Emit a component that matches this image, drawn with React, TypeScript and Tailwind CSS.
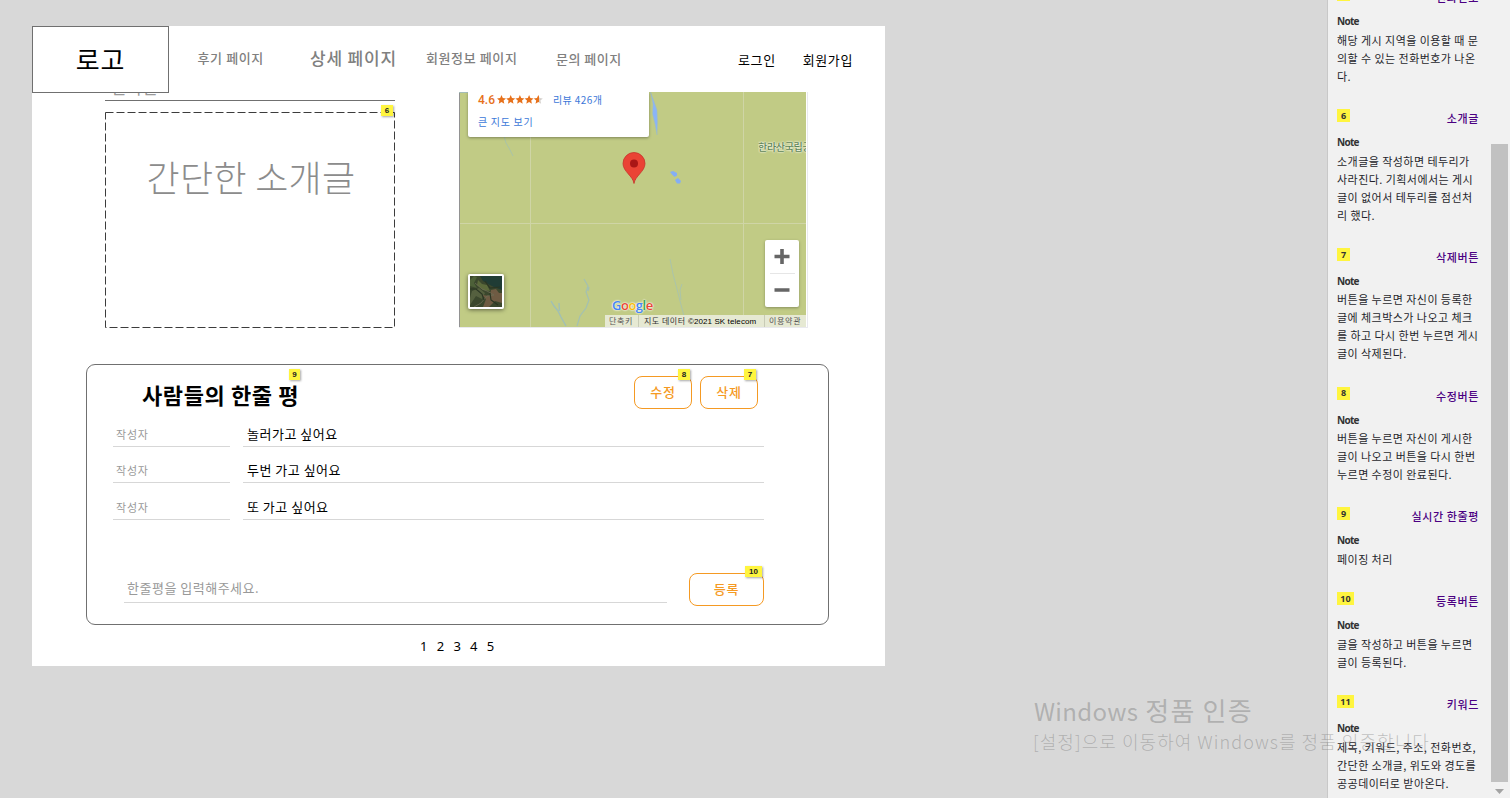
import React from 'react';

type NoteItem = { id: string; title: string; lines: string[] };

const notes: NoteItem[] = [
  { id: '5', title: '전화번호', lines: ['해당 게시 지역을 이용할 때 문', '의할 수 있는 전화번호가 나온', '다.'] },
  { id: '6', title: '소개글', lines: ['소개글을 작성하면 테두리가', '사라진다. 기획서에서는 게시', '글이 없어서 테두리를 점선처', '리 했다.'] },
  { id: '7', title: '삭제버튼', lines: ['버튼을 누르면 자신이 등록한', '글에 체크박스가 나오고 체크', '를 하고 다시 한번 누르면 게시', '글이 삭제된다.'] },
  { id: '8', title: '수정버튼', lines: ['버튼을 누르면 자신이 게시한', '글이 나오고 버튼을 다시 한번', '누르면 수정이 완료된다.'] },
  { id: '9', title: '실시간 한줄평', lines: ['페이징 처리'] },
  { id: '10', title: '등록버튼', lines: ['글을 작성하고 버튼을 누르면', '글이 등록된다.'] },
  { id: '11', title: '키워드', lines: ['제목, 키워드, 주소, 전화번호,', '간단한 소개글, 위도와 경도를', '공공데이터로 받아온다.'] },
];

function Marker({ n, className }: { n: string; className: string }) {
  return (
    <span
      className={`absolute flex h-[11px] items-center justify-center bg-[#fff53f] font-['Liberation_Sans'] text-[8px] leading-none font-bold tracking-normal text-[#222] shadow-[1px_1px_2px_rgba(0,0,0,0.35)] ${className}`}
    >
      {n}
    </span>
  );
}

function Header() {
  return (
    <header className="relative z-10 flex h-[66px] shrink-0 bg-white text-[13px] leading-[20px] text-[#808080]">
      <div className="flex h-[67px] w-[137px] shrink-0 items-center justify-center border border-[#707070] bg-white pb-[2px] text-[26px] tracking-[0.8px] text-black">
        로고
      </div>
      <nav className="flex font-medium">
        <span className="mt-[22px] ml-[28.500px] w-[112.500px] tracking-[0.6px]">후기 페이지</span>
        <span className="mt-[22px] w-[116px] text-[17px] tracking-[0.8px]">상세 페이지</span>
        <span className="mt-[22px] w-[130px] tracking-[0.6px]">회원정보 페이지</span>
        <span className="mt-[23px] tracking-[0.5px]">문의 페이지</span>
      </nav>
      <div className="mt-[24px] mr-[32px] ml-auto flex gap-[27px] tracking-[0.6px] text-black">
        <span>로그인</span>
        <span>회원가입</span>
      </div>
    </header>
  );
}

function Intro() {
  return (
    <div className="w-[290px] shrink-0">
      <div className="flex h-[9px] items-end overflow-hidden border-b border-[#707070]">
        <span className="mb-[2px] ml-[6px] text-[17px] leading-[22px] text-[#999]">한라산</span>
      </div>
      <div className="relative mt-[11px] flex h-[216px] justify-center pt-[38px] text-[36px] leading-[52px] font-light tracking-[0.3px] text-[#8c8c8c]">
        <svg className="absolute inset-0" width="290" height="216">
          <rect x="0.5" y="0.5" width="289" height="215" fill="none" stroke="#3c3c3c" strokeDasharray="8 3" />
        </svg>
        <span className="ml-[2px]">간단한 소개글</span>
        <Marker n="6" className="top-[-7px] right-[2px] w-[12px]" />
      </div>
    </div>
  );
}

const starPath = 'M4.5 0 L5.8 3.1 L9 3.4 L6.6 5.6 L7.3 8.8 L4.5 7.1 L1.7 8.8 L2.4 5.6 L0 3.4 L3.2 3.1 Z';

function Stars() {
  return (
    <svg width="46" height="9" viewBox="0 0 46 9">
      <defs>
        <linearGradient id="half">
          <stop offset="55%" stopColor="#e7711b" />
          <stop offset="55%" stopColor="#d3cfcb" />
        </linearGradient>
      </defs>
      {[0, 1, 2, 3, 4].map((i) => (
        <path key={i} d={starPath} transform={`translate(${i * 9.2} 0)`} fill={i === 4 ? 'url(#half)' : '#e7711b'} />
      ))}
    </svg>
  );
}

function GoogleMap() {
  return (
    <div className="relative ml-[64px] h-[236px] w-[349px] shrink-0 overflow-hidden border-r border-b border-[#e9e9ee] bg-white">
      <svg className="absolute top-0 left-0" width="347" height="235" viewBox="0 0 347 235">
        <rect width="347" height="235" fill="#c1cb85" />
        <path d="M0.5 0V235" stroke="#929292" />
        <path d="M0 .5H9" stroke="#a4bdb9" />
        <path d="M71.500 0V235M284.500 0V235M1 131.500H347" stroke="#cfd5a6" />
        <path d="M191.500 0L194.500 8L198 18L198.500 30L198 43L196 32L193.500 22L194 12Z" fill="#8ab4f8" stroke="#a2bfb8" strokeWidth=".5" />
        <path d="M45 44L47 51L50 56L54 64" fill="none" stroke="#a9c3a8" strokeWidth="1" />
        <path d="M211 80L214 79L218 81V83.500L215.500 85L213 82.500Z" fill="#84aef5" />
        <path d="M216 88L219 86L222 89L221 91.500H218Z" fill="#84aef5" />
        <path d="M92 209L95 214L99 219L102 225L107 234M100 211L100.500 219" fill="none" stroke="#a0bfb5" strokeWidth="1.4" />
        <path d="M125 187L129 194L127 200L130 208L127 216L121 224L118 234M130 195L129 199" fill="none" stroke="#a3c0b2" strokeWidth="1.200" />
        <path d="M211 167L214 182L218 197L221 209L225 224L226 234M223 192L221 198L222 208" fill="none" stroke="#abc4aa" strokeWidth="1" />
        <path d="M175 91.500C174 84 164 79.500 164 71.500A11 11 0 0 1 186 71.500C186 79.500 176 84 175 91.500Z" fill="#ea4335" stroke="#c5332b" strokeWidth=".8" />
        <circle cx="175" cy="71.500" r="4" fill="#a91616" />
      </svg>
      <div className="absolute top-0 left-[9px] h-[45px] w-[181px] rounded-b-[2px] bg-white pl-[10px] text-[11px] text-[#3c78d8] shadow-[0_1px_3px_rgba(0,0,0,0.35)]">
        <div className="flex h-[15px] items-center">
          <span className="w-[19px] font-['Roboto'] text-[12px] font-medium text-[#e7711b]">4.6</span>
          <Stars />
          <span className="ml-[10px] text-[10px] tracking-[0.4px]">리뷰 426개</span>
        </div>
        <div className="mt-[6px] text-[10px] leading-[18px] tracking-[0.7px]">큰 지도 보기</div>
      </div>
      <span className="absolute top-[47px] left-[299px] w-[48px] overflow-hidden text-[10px] leading-[16px] font-medium tracking-[-0.3px] whitespace-nowrap text-[#5f8555] [text-shadow:0_0_2px_#fff,0_0_2px_#fff]">
        한라산국립공원
      </span>
      <div className="absolute top-[182px] left-[9px] h-[35px] w-[36px] overflow-hidden rounded-[2px] border-2 border-white shadow-[0_1px_4px_rgba(0,0,0,0.5)]">
        <svg width="32" height="31" viewBox="0 0 32 31">
          <rect width="32" height="31" fill="#3b472d" />
          <path d="M10 0H32V14L24 11L18 8L13 5Z" fill="#203c35" />
          <path d="M0 4L4 0L7 1L4 7L7 12L0 10Z" fill="#4d6038" />
          <path d="M8 4L12 8L17 9L20 15L13 14L7 9Z" fill="#5c6a3b" />
          <path d="M2 15L9 12L15 17L12 23L6 20L0 29V22Z" fill="#55603f" />
          <path d="M21 14L26 13L29 17H32V27L25 25L19 31H13L16 23L12 19L20 20Z" fill="#6f5b43" />
          <path d="M5 7L12 13L17 15L24 19L17 20L11 27L4 31" fill="none" stroke="#6c6c54" strokeWidth=".8" />
          <path d="M0 13L6 13L12 18L14 24M15 5L20 12L30 11M20 17L21 24L28 29" fill="none" stroke="#2b3623" strokeWidth="1.200" />
        </svg>
      </div>
      <div className="absolute top-[148px] left-[306px] flex h-[67px] w-[34px] flex-col items-center rounded-[2px] bg-white shadow-[0_1px_3px_rgba(0,0,0,0.3)]">
        <svg width="34" height="67" viewBox="0 0 34 67">
          <path d="M9.500 16.500H24.500M17 9V24M9.500 50H24.500" stroke="#666" strokeWidth="3.600" />
          <path d="M5 33.500H30" stroke="#e6e6e6" />
        </svg>
      </div>
      <span className="absolute top-[204px] left-[153px] font-['Open_Sans'] text-[13px] leading-[18px] font-semibold tracking-[-0.5px] [text-shadow:0_0_2px_#fff,0_0_2px_#fff]">
        <span className="text-[#4285f4]">G</span>
        <span className="text-[#ea4335]">o</span>
        <span className="text-[#fbbc05]">o</span>
        <span className="text-[#4285f4]">g</span>
        <span className="text-[#34a853]">l</span>
        <span className="text-[#ea4335]">e</span>
      </span>
      <div className="absolute top-[223px] left-[146px] flex h-[12px] w-[201px] bg-[#e6e9d3] text-[8px] leading-[12px] whitespace-nowrap text-[#555]">
        <span className="w-[34px] border-r border-[#c8cbb6] pl-[4px] tracking-[0.6px]">단축키</span>
        <span className="w-[126px] border-r border-[#c8cbb6] pl-[5px] tracking-[0.5px] text-[#333]">
          지도 데이터 <span className="font-['Liberation_Sans'] tracking-[0.1px] text-black">©2021 SK telecom</span>
        </span>
        <span className="pl-[4px] tracking-[0.7px]">이용약관</span>
      </div>
    </div>
  );
}

function OutlineButton({ label, n, className }: { label: string; n: string; className: string }) {
  return (
    <div
      className={`relative flex h-[33px] items-center justify-center rounded-[8px] border border-[#f59a23] bg-white pb-px text-[13px] font-medium tracking-[0.7px] text-[#f59a23] ${className}`}
    >
      {label}
      <Marker n={n} className={n.length > 1 ? 'top-[-8px] right-[1px] w-[17px]' : 'top-[-8px] right-[1px] w-[12px]'} />
    </div>
  );
}

function Reviews() {
  return (
    <section className="mt-[36px] ml-[54px] flex h-[261px] w-[743px] flex-col rounded-[9px] border border-[#707070] bg-white">
      <div className="flex h-[46px] pt-[11px]">
        <h2 className="relative ml-[55px] pt-[2px] text-[22px] leading-[32px] font-bold tracking-[0.6px] text-black">
          사람들의 한줄 평
          <Marker n="9" className="top-[-7px] right-[-1px] w-[11px]" />
        </h2>
        <div className="mr-[70px] ml-auto flex gap-[8px]">
          <OutlineButton label="수정" n="8" className="w-[58px]" />
          <OutlineButton label="삭제" n="7" className="w-[58px]" />
        </div>
      </div>
      <div className="ml-[26px] flex w-[651px] flex-col">
        <Row text="놀러가고 싶어요" className="h-[36px]" />
        <Row text="두번 가고 싶어요" className="h-[36px]" />
        <Row text="또 가고 싶어요" className="h-[37px]" />
      </div>
      <div className="mt-[53px] ml-[37px] flex w-[640px] justify-between">
        <div className="h-[30px] w-[543px] border-b border-[#d7d7d7] pl-[3px] text-[13px] leading-[30px] tracking-[0.5px] text-[#999]">
          한줄평을 입력해주세요.
        </div>
        <OutlineButton label="등록" n="10" className="w-[75px]" />
      </div>
    </section>
  );
}

function Row({ text, className }: { text: string; className: string }) {
  return (
    <div className={`flex items-end gap-[13px] ${className}`}>
      <div className="h-[26px] w-[117px] border-b border-[#d7d7d7] pl-[3px] text-[11px] leading-[26px] tracking-[0.8px] text-[#999]">작성자</div>
      <div className="h-[26px] flex-1 border-b border-[#d7d7d7] pl-[4px] text-[13px] leading-[26px] tracking-[0.5px] text-black">{text}</div>
    </div>
  );
}

function Sidebar() {
  return (
    <aside className="flex h-[798px] w-[183px] shrink-0 overflow-hidden border-l border-[#c8c8c8] bg-[#f1f1f1]">
      <div className="mt-[-11.8px] ml-[9px] w-[142px] shrink-0">
        {notes.map((note) => (
          <article key={note.id} className="pb-[23.8px]">
            <div className="flex h-[24px] items-start justify-between">
              <span
                className={`flex h-[13px] items-center justify-center bg-[#fff53f] font-['Open_Sans'] text-[9px] font-bold text-[#333] ${note.id.length > 1 ? 'w-[17px]' : 'w-[13px]'}`}
              >
                {note.id}
              </span>
              <span className="text-[11px] leading-[19.6px] font-medium tracking-[0.6px] text-[#4b0082]">{note.title}</span>
            </div>
            <div className="h-[19px] font-['Open_Sans'] text-[10px] leading-[18.6px] font-bold tracking-[-0.7px] text-[#333]">Note</div>
            <p className="text-[11px] leading-[18px] tracking-[0.45px] text-[#1f1f2b]">
              {note.lines.map((line) => (
                <span key={line} className="relative top-[-0.4px] block whitespace-nowrap">
                  {line}
                </span>
              ))}
            </p>
          </article>
        ))}
      </div>
      <div className="ml-[12px] flex w-[17px] shrink-0 flex-col pt-[144px]">
        <div className="h-[638px] bg-[#c1c1c1]" />
        <svg width="17" height="16" viewBox="0 0 17 16">
          <path d="M4 7H13L8.500 12Z" fill="#a3a3a3" />
        </svg>
      </div>
    </aside>
  );
}

export default function App() {
  return (
    <div className="relative flex h-[798px] w-[1510px] overflow-hidden bg-[#d8d8d8] font-['Noto_Sans_CJK_KR',sans-serif]">
      <main className="flex-1 pt-[26px] pl-[32px]">
        <div className="flex h-[640px] w-[853px] flex-col bg-white">
          <Header />
          <div className="flex pl-[73px]">
            <Intro />
            <GoogleMap />
          </div>
          <Reviews />
          <div className="mt-[11px] ml-[388px] flex font-['Noto_Sans'] text-[13px] leading-[20px] text-black">
            {[1, 2, 3, 4, 5].map((n) => (
              <span key={n} className="w-[16.7px]">
                {n}
              </span>
            ))}
          </div>
        </div>
      </main>
      <Sidebar />
      <div className="pointer-events-none absolute top-[693px] left-[1034px] whitespace-nowrap text-[#7d7d7d]/45">
        <div className="text-[26px] leading-[34px] tracking-[1.2px]">
          <span className="text-[24px] tracking-[0.3px]">Windows</span> 정품 인증
        </div>
        <div className="ml-[-1px] text-[18px] leading-[26px] font-light tracking-[1.05px]">[설정]으로 이동하여 Windows를 정품 인증합니다.</div>
      </div>
    </div>
  );
}
